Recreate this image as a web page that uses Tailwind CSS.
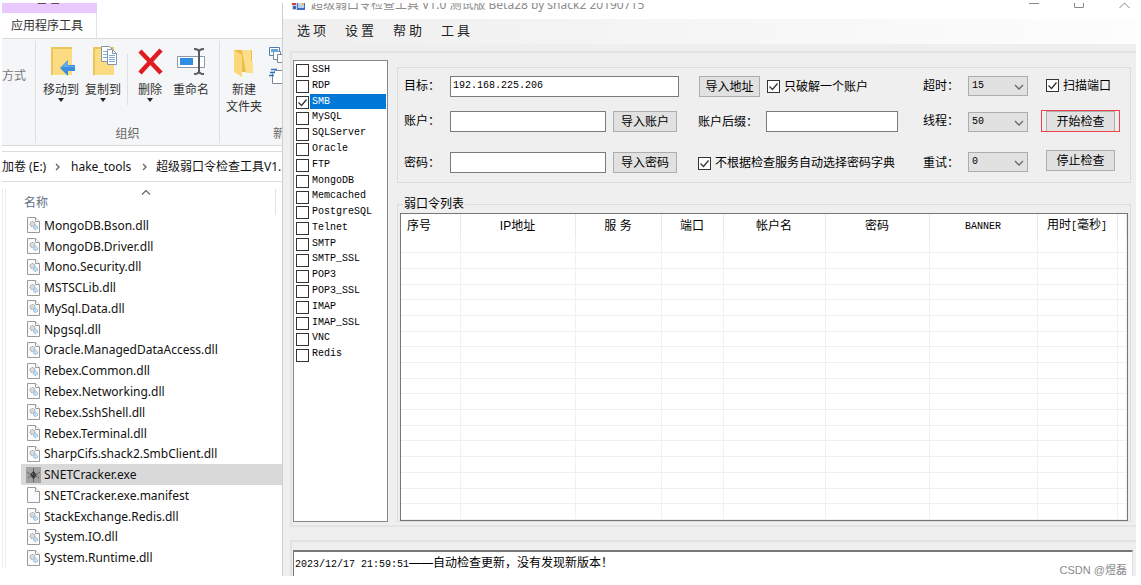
<!DOCTYPE html>
<html lang="zh-CN">
<head>
<meta charset="utf-8">
<title>超级弱口令检查工具</title>
<script src="https://cdn.jsdelivr.net/npm/@tailwindcss/browser@4"></script>
</head>
<body class="relative flex h-screen overflow-hidden bg-white pt-[3px] pr-[5px] pb-[9px] pl-[2px] font-['Liberation_Sans','Noto_Sans_CJK_SC',sans-serif] text-xs text-black">

<!-- File explorer -->
<section class="flex w-[280px] shrink-0 flex-col overflow-hidden font-['Noto_Sans','Noto_Sans_CJK_SC',sans-serif]">
  <header class="flex h-[35px] shrink-0 flex-col overflow-hidden">
    <div class="h-[10px] w-[95px] shrink-0 overflow-hidden bg-[#e9c9fd] text-center leading-4 text-[#333]"><div class="-mt-3 pr-1">管理</div></div>
    <button class="h-[25px] w-[95px] border-r border-[#e4e4e4] pl-[9px] text-left text-[#333]">应用程序工具</button>
  </header>

  <div class="flex h-[108px] shrink-0 border-y border-[#dadbdc] bg-[#f5f6f7] text-[#333]">
    <div class="my-[2px] w-[34px] shrink-0 border-r border-[#dfe0e1] pt-[27px] text-[#777]">方式</div>
    <div class="my-[2px] flex w-[184px] shrink-0 flex-col border-r border-[#dfe0e1]">
      <div class="flex h-[84px] pt-[5px] pl-1">
        <button class="flex w-[42px] flex-col items-center">
          <svg class="h-8 w-7" viewBox="0 0 28 32"><path d="M4 1h21v28H4z" fill="#fbdc82"/><path d="M4 29V1h21v2H6v26z" fill="#eac65b"/><path d="M13 22l8-8v5h7v6h-7v5z" fill="#3b8ede"/><path d="M14 22l7-7v5h7v1H17z" fill="#64aeee"/></svg>
          <span class="mt-[3px] leading-[18px] whitespace-nowrap">移动到</span>
          <svg class="-mt-px h-1 w-[7px]" viewBox="0 0 7 4"><path d="M0 0h6L3 4z" fill="#222"/></svg>
        </button>
        <button class="flex w-[42px] flex-col items-center">
          <svg class="h-8 w-7" viewBox="0 0 28 32"><path d="M4 1h21v28H4z" fill="#fbdc82"/><path d="M4 29V1h21v2H6v26z" fill="#eac65b"/><g fill="#fff" stroke="#8794a5"><path d="M12.500 .5h8l3 3v12h-11z"/><path d="M18.500 3.500h5l4 4v11h-9z"/></g><path d="M23.500 3.500v4h4" fill="none" stroke="#8794a5"/><path d="M20 9.500h6M20 11.500h6M20 13.500h6M20 15.500h6M14 5.500h4M14 8.500h4M14 11.500h4" stroke="#77aee0"/></svg>
          <span class="mt-[3px] leading-[18px] whitespace-nowrap">复制到</span>
          <svg class="-mt-px h-1 w-[7px]" viewBox="0 0 7 4"><path d="M0 0h6L3 4z" fill="#222"/></svg>
        </button>
        <div class="mt-2 mb-5 w-[4px] border-r border-[#dfe0e1]"></div>
        <button class="flex w-[42px] flex-col items-center pl-[2px]">
          <svg class="h-8 w-7" viewBox="0 0 28 32"><path d="M4 5l21 22M25 4L4 27" stroke="#e01b22" stroke-width="4.500"/></svg>
          <span class="mt-[3px] leading-[18px] whitespace-nowrap">删除</span>
          <svg class="-mt-px h-1 w-[7px]" viewBox="0 0 7 4"><path d="M0 0h6L3 4z" fill="#222"/></svg>
        </button>
        <button class="flex w-[42px] flex-col items-center">
          <svg class="h-8 w-7" viewBox="0 0 28 32"><path d="M.5 10.500h27v11H.5z" fill="#fff" stroke="#8d98a5"/><path d="M3 12h13v7H3z" fill="#2f8ee2"/><path d="M17 3c3 0 5 1 5 3 0-2 2-3 5-3M22 5v21M17 28c3 0 5-1 5-3 0 2 2 3 5 3" fill="none" stroke="#555b62" stroke-width="2"/></svg>
          <span class="mt-[3px] leading-[18px] whitespace-nowrap">重命名</span>
        </button>
      </div>
      <div class="text-center leading-[18px] text-[#666]">组织</div>
    </div>
    <div class="my-[2px] flex min-w-0 flex-1 flex-col overflow-hidden">
      <div class="flex h-[84px] pt-[5px]">
        <button class="flex w-[48px] shrink-0 flex-col items-center">
          <svg class="h-8 w-7" viewBox="0 0 28 32"><path d="M4 4h18v22H4z" fill="#e9bd4e"/><path d="M12 4h9v11l2 2v10h-7z" fill="#fbdf8b"/><path d="M4 4l8 5v22l-8-5z" fill="#fdd878"/></svg>
          <span class="mt-[3px] leading-[17px] whitespace-nowrap">新建</span>
          <span class="leading-[17px] whitespace-nowrap">文件夹</span>
        </button>
        <svg class="h-10 w-4 shrink-0" viewBox="0 0 16 40"><g fill="#fff" stroke="#7b8794"><path d="M1.500 1.500h10v8h-10z" stroke="#4f7fae"/><path d="M5.500 5.500h7v8h-7z"/><path d="M9.500 8.500h7v8h-7z"/><path d="M16 24.500H7.500L4.500 27.500v10H16"/></g><path d="M3 3h7v3H3z" fill="#66a8dc"/><path d="M3 23.500h6M2 26.500h5M1 29.500h5" stroke="#2f75bb" stroke-width="1.500"/></svg>
      </div>
      <div class="pl-[53px] leading-[18px] whitespace-nowrap text-[#666]">新</div>
    </div>
  </div>

  <nav class="mt-[5px] flex h-[31px] shrink-0 items-center overflow-hidden border-y border-[#dcdcdc] whitespace-nowrap text-[#111]">
    <a href="#" class="w-[51px] shrink-0">加卷 (E:)</a>
    <svg class="mr-[10px] ml-[2px] h-2 w-[6px] shrink-0" viewBox="0 0 6 8" fill="none" stroke="#666" stroke-width="1.400"><path d="M1 1l3 3-3 3"/></svg>
    <a href="#" class="w-[61px] shrink-0">hake_tools</a>
    <svg class="mr-[8px] ml-[10px] h-2 w-[6px] shrink-0" viewBox="0 0 6 8" fill="none" stroke="#666" stroke-width="1.400"><path d="M1 1l3 3-3 3"/></svg>
    <a href="#" class="shrink-0">超级弱口令检查工具V1.</a>
  </nav>

  <div class="mt-[7px] flex h-[379px] shrink-0">
    <div class="w-[4px] shrink-0 border-x border-[#ececec]"></div>
    <div class="ml-[15px] min-w-0 flex-1">
      <div class="flex h-[26px] w-[255px] border-r border-[#e2e2e2] pl-[3px] text-[#5d6e86]">
        <span class="w-[117px] pt-[5px] leading-[18px]">名称</span>
        <svg class="mt-px h-[5px] w-[10px]" viewBox="0 0 10 5" fill="none" stroke="#666" stroke-width="1.200"><path d="M1 4.500l4-4 4 4"/></svg>
      </div>
      <ul id="files" class="grid h-[353px] auto-rows-fr text-[#111]"></ul>
    </div>
  </div>
</section>

<!-- Application window -->
<main class="flex min-w-0 flex-1 flex-col overflow-hidden border-l border-[#cfcfcf] bg-[#efefef]">
  <header class="flex h-4 shrink-0 items-start justify-between overflow-hidden bg-white">
    <div class="flex pl-[9px]">
      <svg class="h-[8px] w-[13px]" viewBox="0 0 13 8"><path d="M0 0h6v7H0z" fill="#ccd3da"/><path d="M0 0h4v2H0z" fill="#cf3d33"/><path d="M1 3h3v3H1z" fill="#3a67ba"/><path d="M5 0h8v7H5z" fill="#3f6fc2"/><path d="M6 0h6v5H6z" fill="#b9d2f2"/><path d="M10 0h2v2h-2z" fill="#efbe3e"/></svg>
      <h1 class="-mt-2 ml-[6px] font-['Noto_Sans','Noto_Sans_CJK_SC',sans-serif] leading-[20px] whitespace-nowrap text-[#8c8c8c]">超级弱口令检查工具 V1.0 测试版 Beta28 by shack2 20190715</h1>
    </div>
    <div class="flex gap-[34px] pr-[6px]">
      <button aria-label="最小化"><svg class="block h-[6px] w-[11px]" viewBox="0 0 11 6" stroke="#888"><path d="M0 .5h10"/></svg></button>
      <button aria-label="最大化"><svg class="block h-[6px] w-[11px]" viewBox="0 0 11 6" fill="none" stroke="#888"><path d="M.5 0v4.500h9V0"/></svg></button>
      <button aria-label="关闭"><svg class="block h-[6px] w-[11px]" viewBox="0 0 11 6" fill="none" stroke="#888"><path d="M.5 5l5-5 5 5"/></svg></button>
    </div>
  </header>
  <nav class="flex h-[25px] shrink-0 items-start bg-linear-to-r from-[#efefef] to-[#fdfdfd] pl-[14px] font-['Noto_Sans_CJK_SC',sans-serif] text-[13px] leading-[22px] text-[#222]">
    <button class="w-12 text-left">选 项</button><button class="w-12 text-left">设 置</button><button class="w-12 text-left">帮 助</button><button class="w-12 text-left">工 具</button>
  </nav>

  <div class="mt-[7px] ml-[7px] flex min-h-0 flex-1 gap-[9px] border-y-2 border-l-2 border-[#e3e3e3] pt-[7px] pr-[5px] pb-[3px] pl-px">
    <div class="w-[95px] shrink-0 border border-[#828790] bg-white p-px">
      <ul id="services" class="grid h-[300px] auto-rows-fr font-['Liberation_Mono',monospace] text-[10px]"></ul>
    </div>

    <div class="flex min-w-0 flex-1 flex-col pt-[7px]">
      <form class="grid h-[116px] shrink-0 grid-cols-[46px_1fr_244px_45px_60px_102px] grid-rows-[35px_41px_21px] border border-[#dcdcdc] pt-2 pl-[6px]" onsubmit="return false">
        <label for="target" class="leading-[21px]">目标：</label>
        <input id="target" value="192.168.225.206" class="h-[21px] w-full border border-[#7a7a7a] bg-white px-[2px] pb-[2px] font-['Liberation_Mono',monospace] text-[10px]">
        <div class="flex h-[21px] items-center pl-5">
          <button class="mr-[7px] h-[21px] w-[61px] border border-[#adadad] bg-[#e1e1e1] leading-[20px]">导入地址</button>
          <label class="flex items-center gap-[4px]"><span class="grid"><input type="checkbox" checked class="peer col-start-1 row-start-1 size-[13px] appearance-none border border-[#333] bg-white"><svg class="pointer-events-none invisible col-start-1 row-start-1 size-[13px] peer-checked:visible" viewBox="0 0 13 13" fill="none" stroke="#333" stroke-width="1.300"><path d="M2.500 6.500l3 3 5-6"/></svg></span>只破解一个账户</label>
        </div>
        <label for="timeout" class="leading-[21px]">超时：</label>
        <div class="relative h-5"><select id="timeout" class="h-5 w-full appearance-none border border-[#adadad] bg-[#e1e1e1] pl-[3px] font-['Liberation_Mono',monospace] text-[10px]"><option>15</option></select><svg class="pointer-events-none absolute top-[8px] right-[4px] h-[6px] w-[10px]" viewBox="0 0 10 6" fill="none" stroke="#666" stroke-width="1.300"><path d="M1 1l4 4 4-4"/></svg></div>
        <label class="flex h-[19px] items-center gap-[4px] pl-[18px]"><span class="grid"><input type="checkbox" checked class="peer col-start-1 row-start-1 size-[13px] appearance-none border border-[#333] bg-white"><svg class="pointer-events-none invisible col-start-1 row-start-1 size-[13px] peer-checked:visible" viewBox="0 0 13 13" fill="none" stroke="#333" stroke-width="1.300"><path d="M2.500 6.500l3 3 5-6"/></svg></span>扫描端口</label>

        <label for="account" class="leading-[21px]">账户：</label>
        <div class="flex gap-[7px] pr-[2px]"><input id="account" class="h-[21px] w-full min-w-0 flex-1 border border-[#7a7a7a] bg-white"><button class="h-[21px] w-[64px] border border-[#adadad] bg-[#e1e1e1] leading-[20px]">导入账户</button></div>
        <div class="flex pl-[19px]"><label for="suffix" class="w-[68px] leading-[23px]">账户后缀：</label><input id="suffix" class="h-[21px] w-[132px] border border-[#7a7a7a] bg-white"></div>
        <label for="threads" class="leading-[21px]">线程：</label>
        <div class="relative mt-px h-5"><select id="threads" class="h-5 w-full appearance-none border border-[#adadad] bg-[#e1e1e1] pl-[3px] font-['Liberation_Mono',monospace] text-[10px]"><option>50</option></select><svg class="pointer-events-none absolute top-[8px] right-[4px] h-[6px] w-[10px]" viewBox="0 0 10 6" fill="none" stroke="#666" stroke-width="1.300"><path d="M1 1l4 4 4-4"/></svg></div>
        <div class="pl-[18px]"><div class="relative w-[69px]"><button class="h-[21px] w-full border border-[#adadad] bg-[#e1e1e1] leading-[20px]">开始检查</button><span class="pointer-events-none absolute -inset-x-[5px] -top-px bottom-0 border border-[#f04048]"></span></div></div>

        <label for="password" class="leading-[23px]">密码：</label>
        <div class="flex gap-[7px] pr-[2px]"><input id="password" class="h-[21px] w-full min-w-0 flex-1 border border-[#7a7a7a] bg-white"><button class="h-[21px] w-[64px] border border-[#adadad] bg-[#e1e1e1] leading-[20px]">导入密码</button></div>
        <label class="flex h-[22px] items-center gap-[4px] pl-[19px] whitespace-nowrap"><span class="grid"><input type="checkbox" checked class="peer col-start-1 row-start-1 size-[13px] appearance-none border border-[#333] bg-white"><svg class="pointer-events-none invisible col-start-1 row-start-1 size-[13px] peer-checked:visible" viewBox="0 0 13 13" fill="none" stroke="#333" stroke-width="1.300"><path d="M2.500 6.500l3 3 5-6"/></svg></span>不根据检查服务自动选择密码字典</label>
        <label for="retry" class="leading-[23px]">重试：</label>
        <div class="relative h-5"><select id="retry" class="h-5 w-full appearance-none border border-[#adadad] bg-[#e1e1e1] pl-[3px] font-['Liberation_Mono',monospace] text-[10px]"><option>0</option></select><svg class="pointer-events-none absolute top-[8px] right-[4px] h-[6px] w-[10px]" viewBox="0 0 10 6" fill="none" stroke="#666" stroke-width="1.300"><path d="M1 1l4 4 4-4"/></svg></div>
        <div class="-mt-[2px] pl-[18px]"><button class="h-[21px] w-[69px] border border-[#adadad] bg-[#e1e1e1] leading-[18px]">停止检查</button></div>
      </form>

      <fieldset class="mt-[12px] flex min-h-0 flex-1 flex-col border border-[#dcdcdc] px-[2px]">
        <legend class="ml-[3px] px-px leading-[18px]">弱口令列表</legend>
        <div class="min-h-0 flex-1 border border-[#777] bg-white">
          <table class="h-full w-full table-fixed border-collapse">
            <colgroup><col class="w-[59px]"><col class="w-[115px]"><col class="w-[86px]"><col class="w-[62px]"><col class="w-[102px]"><col class="w-[104px]"><col class="w-[108px]"><col class="w-[80px]"><col></colgroup>
            <thead><tr class="h-[23px] *:border-r *:border-[#e8e8e8] *:p-0 *:font-normal *:whitespace-nowrap">
              <th class="text-left"><span class="pl-[6px]">序号</span></th><th>IP地址</th><th>服 务</th><th>端口</th><th>帐户名</th><th>密码</th><th><span class="font-['Liberation_Mono',monospace] text-[10px]">BANNER</span></th><th>用时<span class="font-['Liberation_Mono',monospace] text-[10px]">[</span>毫秒<span class="font-['Liberation_Mono',monospace] text-[10px]">]</span></th><td></td>
            </tr></thead>
            <tbody id="rows"></tbody>
          </table>
        </div>
      </fieldset>
    </div>
  </div>

  <div class="mt-[13px] ml-[7px] h-[36px] shrink-0 border-t-2 border-l-2 border-[#e3e3e3] pt-2 pr-[3px] pl-px">
    <div class="h-full border-t-2 border-r border-l border-t-[#777] border-r-[#ddd] border-l-[#777] bg-white pl-px leading-[22px]"><span class="font-['Liberation_Mono',monospace] text-[10px]">2023/12/17 21:59:51</span>——自动检查更新，没有发现新版本！</div>
  </div>
</main>
<span class="absolute right-[14px] bottom-[7px] text-[11px] leading-4 text-[#8a8a8a]">CSDN @煜磊</span>

<script>
const page = '<path d="M.5 .5h8l4 4v11h-12z" fill="#fbfbfb" stroke="#9a9a9a"/><path d="M8.500 .5v4h4" fill="#fff" stroke="#9a9a9a"/>';
const icons = {
  dll: page + '<circle cx="5.500" cy="7" r="2.500" fill="#d5dde2" stroke="#8c9aa3" stroke-dasharray="1.500 .7"/><circle cx="8.500" cy="10.500" r="2" fill="#c3e0f4" stroke="#84aecb" stroke-dasharray="1.500 .7"/>',
  manifest: page,
  exe: '<path d="M-1 0h15v16H-1z" fill="#a2a2a2"/><path d="M0 5l4 3M13 5L9 8M1 11l4-3M12 11L8 8M6.500 1v4M6.500 11v4" stroke="#666"/><path d="M6.500 4l3 3-1 3-2 2-2-2-1-3z" fill="#3a3a3a"/><path d="M5 7h1M7.500 7h1" stroke="#999"/>'
};
const files = ['MongoDB.Bson.dll','MongoDB.Driver.dll','Mono.Security.dll','MSTSCLib.dll','MySql.Data.dll','Npgsql.dll','Oracle.ManagedDataAccess.dll','Rebex.Common.dll','Rebex.Networking.dll','Rebex.SshShell.dll','Rebex.Terminal.dll','SharpCifs.shack2.SmbClient.dll','SNETCracker.exe','SNETCracker.exe.manifest','StackExchange.Redis.dll','System.IO.dll','System.Runtime.dll'];
document.getElementById('files').innerHTML = files.map(name =>
  `<li class="flex items-center gap-[4px] pl-[6px] whitespace-nowrap ${name.endsWith('.exe') ? 'bg-[#d9d9d9]' : ''}"><svg class="h-4 w-[13px] shrink-0 overflow-visible" viewBox="0 0 13 16" fill="none">${icons[name.split('.').pop()]}</svg><span class="pt-px">${name}</span></li>`).join('');

const services = ['SSH','RDP','SMB','MySQL','SQLServer','Oracle','FTP','MongoDB','Memcached','PostgreSQL','Telnet','SMTP','SMTP_SSL','POP3','POP3_SSL','IMAP','IMAP_SSL','VNC','Redis'];
document.getElementById('services').innerHTML = services.map(name =>
  `<li class="min-h-0"><label class="flex h-full items-center gap-px pl-px"><span class="grid pt-[2px]"><input type="checkbox" ${name === 'SMB' ? 'checked' : ''} class="peer col-start-1 row-start-1 size-[13px] appearance-none border border-[#333] bg-white"><svg class="pointer-events-none invisible col-start-1 row-start-1 size-[13px] peer-checked:visible" viewBox="0 0 13 13" fill="none" stroke="#333" stroke-width="1.300"><path d="M2.500 6.500l3 3 5-6"/></svg></span><span class="h-full flex-1 pl-[2px] leading-[15px] ${name === 'SMB' ? 'bg-[#0078d7] text-white' : ''}">${name}</span></label></li>`).join('');

document.getElementById('rows').innerHTML = Array.from({length: 18}, () =>
  '<tr class="h-[15px] *:border-r *:border-b *:border-[#f0f0f0] *:p-0">' + '<td></td>'.repeat(9) + '</tr>').join('');
</script>
</body>
</html>
